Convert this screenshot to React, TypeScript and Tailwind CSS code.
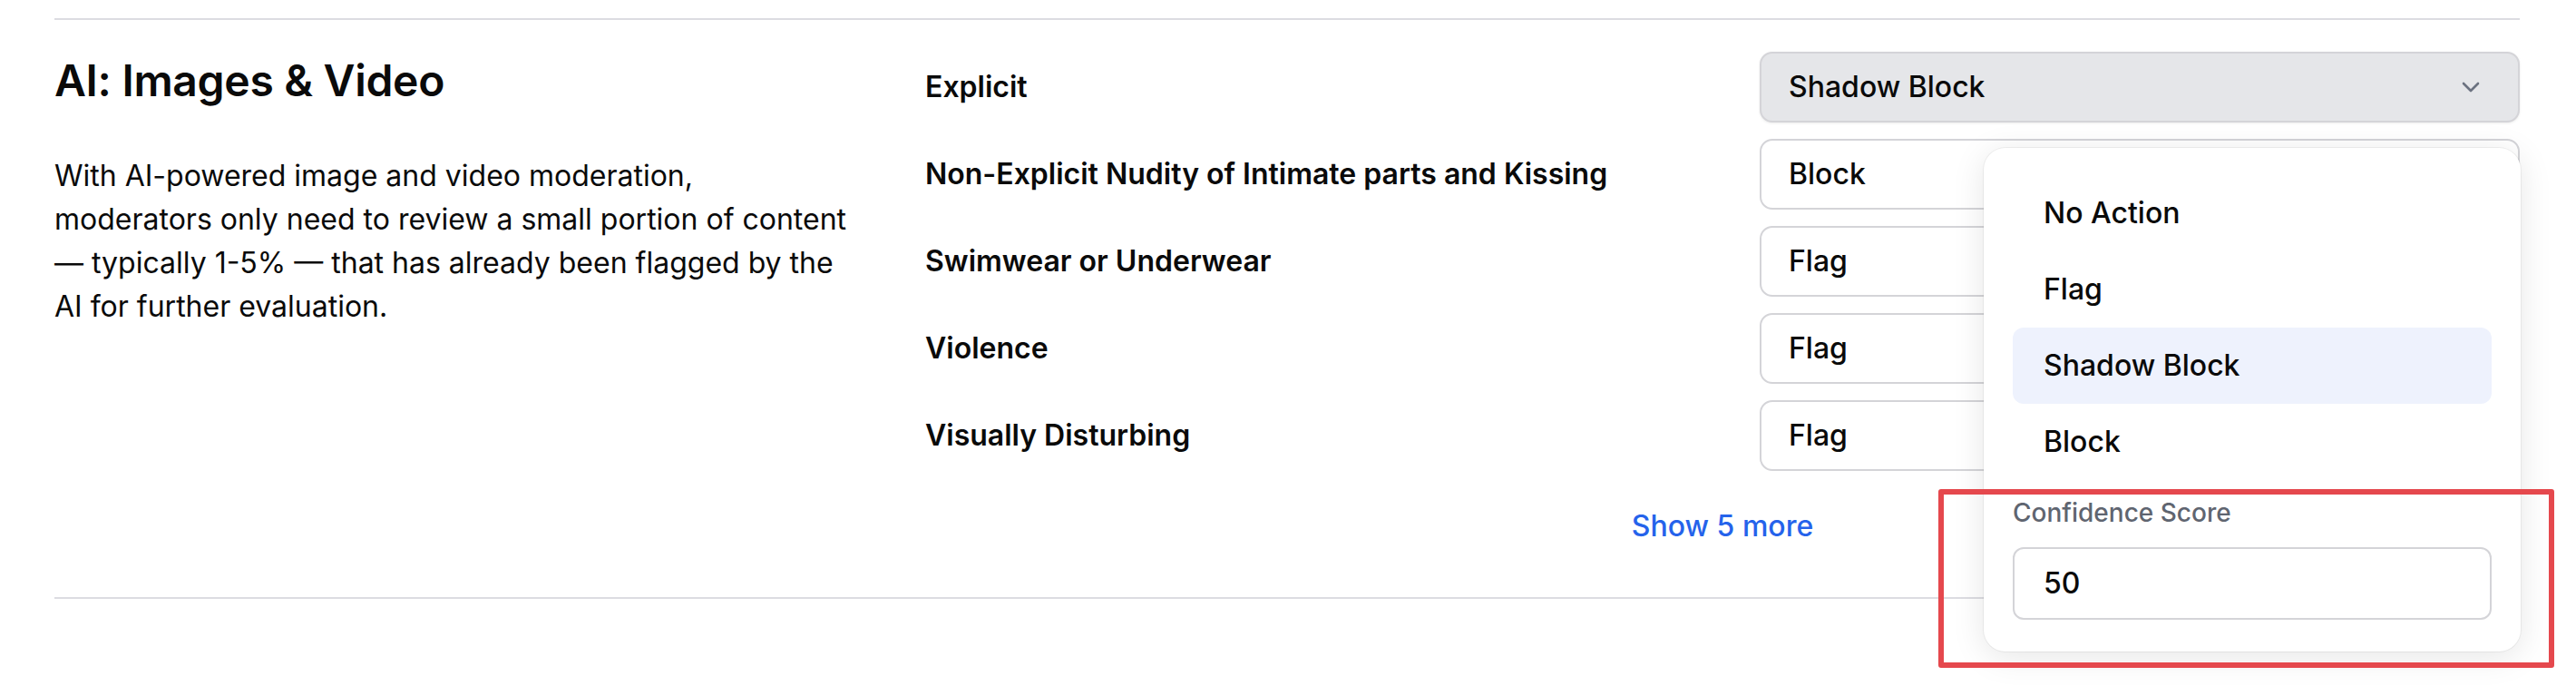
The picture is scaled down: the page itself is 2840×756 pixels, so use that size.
import { useState } from 'react'

const rows = [
  { label: 'Explicit', value: 'Shadow Block' },
  { label: 'Non-Explicit Nudity of Intimate parts and Kissing', value: 'Block' },
  { label: 'Swimwear or Underwear', value: 'Flag' },
  { label: 'Violence', value: 'Flag' },
  { label: 'Visually Disturbing', value: 'Flag' }
]

const options = ['No Action', 'Flag', 'Shadow Block', 'Block']

function Chevron() {
  return (
    <svg width="20" height="12" viewBox="0 0 20 12" fill="none" className="shrink-0">
      <polyline points="2,2 10,10 18,2" stroke="#6b7280" strokeWidth="2.6" strokeLinecap="round" strokeLinejoin="round" />
    </svg>
  )
}

function ActionMenu({ selected }: { selected: string }) {
  return (
    <div className="absolute right-[-1px] top-[106px] z-10 w-[592px] rounded-[24px] bg-white pt-[30px] pb-[35px] shadow-[0_6px_36px_rgba(0,0,0,0.10)] ring-1 ring-black/5">
      <div className="flex flex-col px-[32px]">
        {options.map((opt) => (
          <div
            key={opt}
            className={
              opt === selected
                ? 'flex h-[84px] items-center rounded-[12px] bg-[#eef2fd] pl-[34px] text-[32px] font-medium text-[#0a0a0a]'
                : 'flex h-[84px] items-center rounded-[12px] pl-[34px] text-[32px] font-medium text-[#0a0a0a]'
            }
          >
            {opt}
          </div>
        ))}
      </div>
      <div className="mt-[18px] px-[32px]">
        <div className="text-[28px] font-medium leading-[36px] text-[#5f6570]">Confidence Score</div>
        <div className="mt-[20px] flex h-[80px] items-center rounded-[12px] border-2 border-[#d4d4d8] pl-[32px] text-[32px] font-medium text-[#0a0a0a]">
          50
        </div>
      </div>
      {/* annotation box */}
      <div className="pointer-events-none absolute left-[-50px] top-[376px] h-[197px] w-[679px] rounded-[3px] border-[6px] border-[#e5484d]" />
    </div>
  )
}

export default function App() {
  const [open] = useState(true)

  return (
    <div className="min-h-[756px] bg-white pl-[60px] pr-[62px] pt-[20px] font-['Inter','Noto_Sans',sans-serif] text-[#0a0a0a]">
      <section className="flex border-y-2 border-[#dcdce1] pt-[35px] pb-[54px]">
        <div className="w-[960px] shrink-0 pt-[4px] pr-[82px]">
          <h2 className="text-[48px] font-semibold leading-[56px] tracking-[-0.3px]">AI: Images &amp; Video</h2>
          <p className="mt-[53px] text-[32px] leading-[48px]">
            With AI-powered image and video moderation, moderators only need to review a small portion of content — typically 1-5% — that has already been flagged by the AI for further evaluation.
          </p>
        </div>

        <div className="flex flex-1 flex-col">
          <div className="flex flex-col gap-[18px]">
            {rows.map((row, i) => (
              <div key={row.label} className="flex items-center">
                <div className="flex-1 text-[32px] font-semibold">{row.label}</div>
                <div className="relative w-[838px]">
                  <div
                    className={
                      i === 0
                        ? 'flex h-[78px] items-center justify-between rounded-[14px] border-2 border-[#d4d4d8] bg-[#e5e6e9] pl-[30px] pr-[42px] text-[32px] font-medium shadow-[0_1px_3px_rgba(0,0,0,0.08)]'
                        : 'flex h-[78px] items-center justify-between rounded-[14px] border-2 border-[#d4d4d8] bg-white pl-[30px] pr-[42px] text-[32px] font-medium'
                    }
                  >
                    <span>{row.value}</span>
                    <Chevron />
                  </div>
                  {i === 0 && open && <ActionMenu selected={row.value} />}
                </div>
              </div>
            ))}
          </div>
          <div className="mt-[37px] text-center">
            <button className="text-[32px] font-medium leading-[48px] text-[#2563eb]">Show 5 more</button>
          </div>
        </div>
      </section>
    </div>
  )
}
